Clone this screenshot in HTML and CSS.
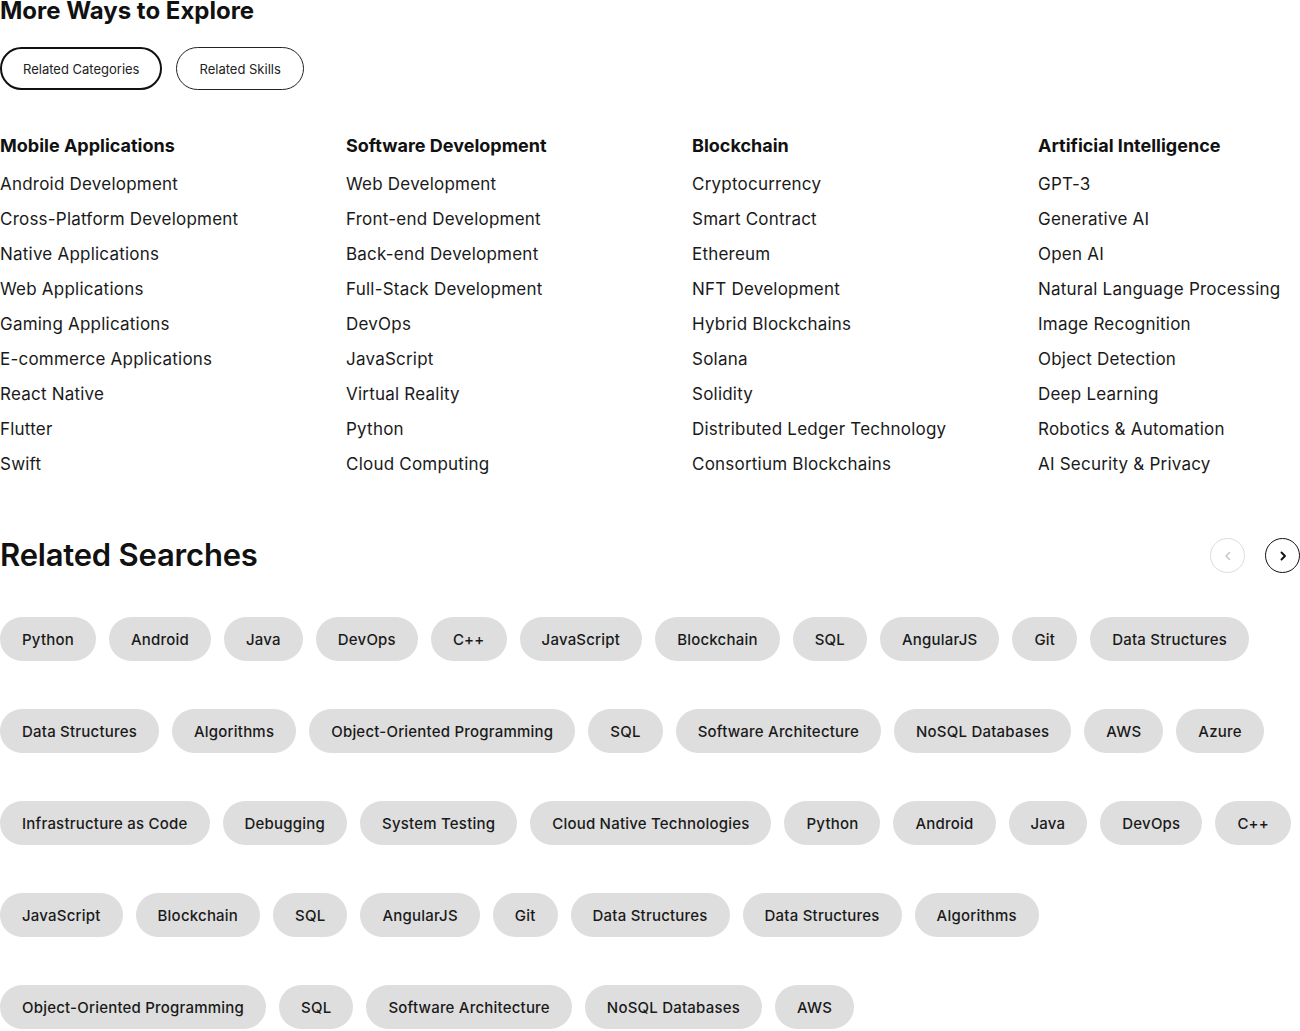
FILE: index.html
```html
<!DOCTYPE html>
<html lang="en">
<head>
<meta charset="utf-8">
<title>More Ways to Explore</title>
<link rel="stylesheet" href="styles.css">
</head>
<body>
<main class="page">
  <section class="explore">
    <h2 class="explore-title">More Ways to Explore</h2>
    <div class="tabs">
      <button class="tab tab-active">Related Categories</button>
      <button class="tab">Related Skills</button>
    </div>
    <div class="columns">
      <div class="col">
        <h3 class="col-title">Mobile Applications</h3>
        <ul class="col-list">
          <li>Android Development</li>
          <li>Cross-Platform Development</li>
          <li>Native Applications</li>
          <li>Web Applications</li>
          <li>Gaming Applications</li>
          <li>E-commerce Applications</li>
          <li>React Native</li>
          <li>Flutter</li>
          <li>Swift</li>
        </ul>
      </div>
      <div class="col">
        <h3 class="col-title">Software Development</h3>
        <ul class="col-list">
          <li>Web Development</li>
          <li>Front-end Development</li>
          <li>Back-end Development</li>
          <li>Full-Stack Development</li>
          <li>DevOps</li>
          <li>JavaScript</li>
          <li>Virtual Reality</li>
          <li>Python</li>
          <li>Cloud Computing</li>
        </ul>
      </div>
      <div class="col">
        <h3 class="col-title">Blockchain</h3>
        <ul class="col-list">
          <li>Cryptocurrency</li>
          <li>Smart Contract</li>
          <li>Ethereum</li>
          <li>NFT Development</li>
          <li>Hybrid Blockchains</li>
          <li>Solana</li>
          <li>Solidity</li>
          <li>Distributed Ledger Technology</li>
          <li>Consortium Blockchains</li>
        </ul>
      </div>
      <div class="col">
        <h3 class="col-title">Artificial Intelligence</h3>
        <ul class="col-list">
          <li>GPT-3</li>
          <li>Generative AI</li>
          <li>Open AI</li>
          <li>Natural Language Processing</li>
          <li>Image Recognition</li>
          <li>Object Detection</li>
          <li>Deep Learning</li>
          <li>Robotics &amp; Automation</li>
          <li>AI Security &amp; Privacy</li>
        </ul>
      </div>
    </div>
  </section>

  <section class="searches">
    <div class="searches-head">
      <h2 class="searches-title">Related Searches</h2>
      <div class="pager">
        <button class="pager-btn pager-btn-off" aria-label="Previous">
          <svg width="12" height="12" viewBox="0 0 12 12"><path d="M7.5 2.5 4 6l3.5 3.5" fill="none" stroke="currentColor" stroke-width="1.6" stroke-linecap="round" stroke-linejoin="round"/></svg>
        </button>
        <button class="pager-btn" aria-label="Next">
          <svg width="12" height="12" viewBox="0 0 12 12"><path d="M4.5 2.5 8 6l-3.5 3.5" fill="none" stroke="currentColor" stroke-width="1.9" stroke-linecap="round" stroke-linejoin="round"/></svg>
        </button>
      </div>
    </div>
    <div class="chips">
      <span class="chip">Python</span>
      <span class="chip">Android</span>
      <span class="chip">Java</span>
      <span class="chip">DevOps</span>
      <span class="chip">C++</span>
      <span class="chip">JavaScript</span>
      <span class="chip">Blockchain</span>
      <span class="chip">SQL</span>
      <span class="chip">AngularJS</span>
      <span class="chip">Git</span>
      <span class="chip">Data Structures</span>
      <span class="chip">Data Structures</span>
      <span class="chip">Algorithms</span>
      <span class="chip">Object-Oriented Programming</span>
      <span class="chip">SQL</span>
      <span class="chip">Software Architecture</span>
      <span class="chip">NoSQL Databases</span>
      <span class="chip">AWS</span>
      <span class="chip">Azure</span>
      <span class="chip">Infrastructure as Code</span>
      <span class="chip">Debugging</span>
      <span class="chip">System Testing</span>
      <span class="chip">Cloud Native Technologies</span>
      <span class="chip">Python</span>
      <span class="chip">Android</span>
      <span class="chip">Java</span>
      <span class="chip">DevOps</span>
      <span class="chip">C++</span>
      <span class="chip">JavaScript</span>
      <span class="chip">Blockchain</span>
      <span class="chip">SQL</span>
      <span class="chip">AngularJS</span>
      <span class="chip">Git</span>
      <span class="chip">Data Structures</span>
      <span class="chip">Data Structures</span>
      <span class="chip">Algorithms</span>
      <span class="chip">Object-Oriented Programming</span>
      <span class="chip">SQL</span>
      <span class="chip">Software Architecture</span>
      <span class="chip">NoSQL Databases</span>
      <span class="chip">AWS</span>
    </div>
  </section>
</main>
</body>
</html>
```

FILE: styles.css
```css
* {
  box-sizing: border-box;
}

html, body {
  margin: 0;
  padding: 0;
  background: #ffffff;
}

body {
  font-family: Inter, "Noto Sans", sans-serif;
  color: #111111;
  overflow: hidden;
}

.page {
  width: 1300px;
  margin-top: -9px;
}

.explore-title {
  margin: 0;
  font-size: 24px;
  line-height: 40px;
  font-weight: 700;
  color: #111;
}

.tabs {
  display: flex;
  gap: 14px;
  margin-top: 16px;
}

.tab {
  height: 43px;
  padding: 0 22px;
  border: 1px solid #222;
  border-radius: 22px;
  background: #fff;
  font-family: Inter, sans-serif;
  font-size: 13px;
  color: #222;
}

.tab-active {
  border: 2px solid #111;
  padding: 0 21px;
}

.columns {
  display: grid;
  grid-template-columns: repeat(4, 346px);
  margin-top: 44px;
}

.col-title {
  margin: 0;
  font-size: 18px;
  line-height: 24px;
  font-weight: 700;
  color: #111;
}

.col-list {
  list-style: none;
  margin: 9px 0 0;
  padding: 0;
}

.col-list li {
  font-size: 17px;
  line-height: 35px;
  letter-spacing: 0.22px;
  color: #1a1a1a;
  white-space: nowrap;
}

.searches {
  margin-top: 52px;
}

.searches-head {
  display: flex;
  align-items: center;
  justify-content: space-between;
  height: 40px;
}

.searches-title {
  margin: 0;
  font-size: 31px;
  font-weight: 600;
  letter-spacing: -0.2px;
  color: #111;
}

.pager {
  display: flex;
  gap: 20px;
  padding-top: 3px;
}

.pager-btn {
  width: 35px;
  height: 35px;
  border-radius: 50%;
  border: 1.5px solid #111;
  background: #fff;
  color: #111;
  display: flex;
  align-items: center;
  justify-content: center;
  padding: 0;
}

.pager-btn-off {
  border-color: #dcdcdc;
  color: #c8c8c8;
}

.chips {
  display: flex;
  flex-wrap: wrap;
  column-gap: 13px;
  row-gap: 48px;
  margin-top: 43px;
  width: 1300px;
}

.chip {
  display: inline-flex;
  align-items: center;
  height: 44px;
  padding: 0 22px;
  border-radius: 22px;
  background: #dedede;
  font-size: 15px;
  font-weight: 500;
  letter-spacing: 0.21px;
  color: #1a1a1a;
  white-space: nowrap;
}
```
